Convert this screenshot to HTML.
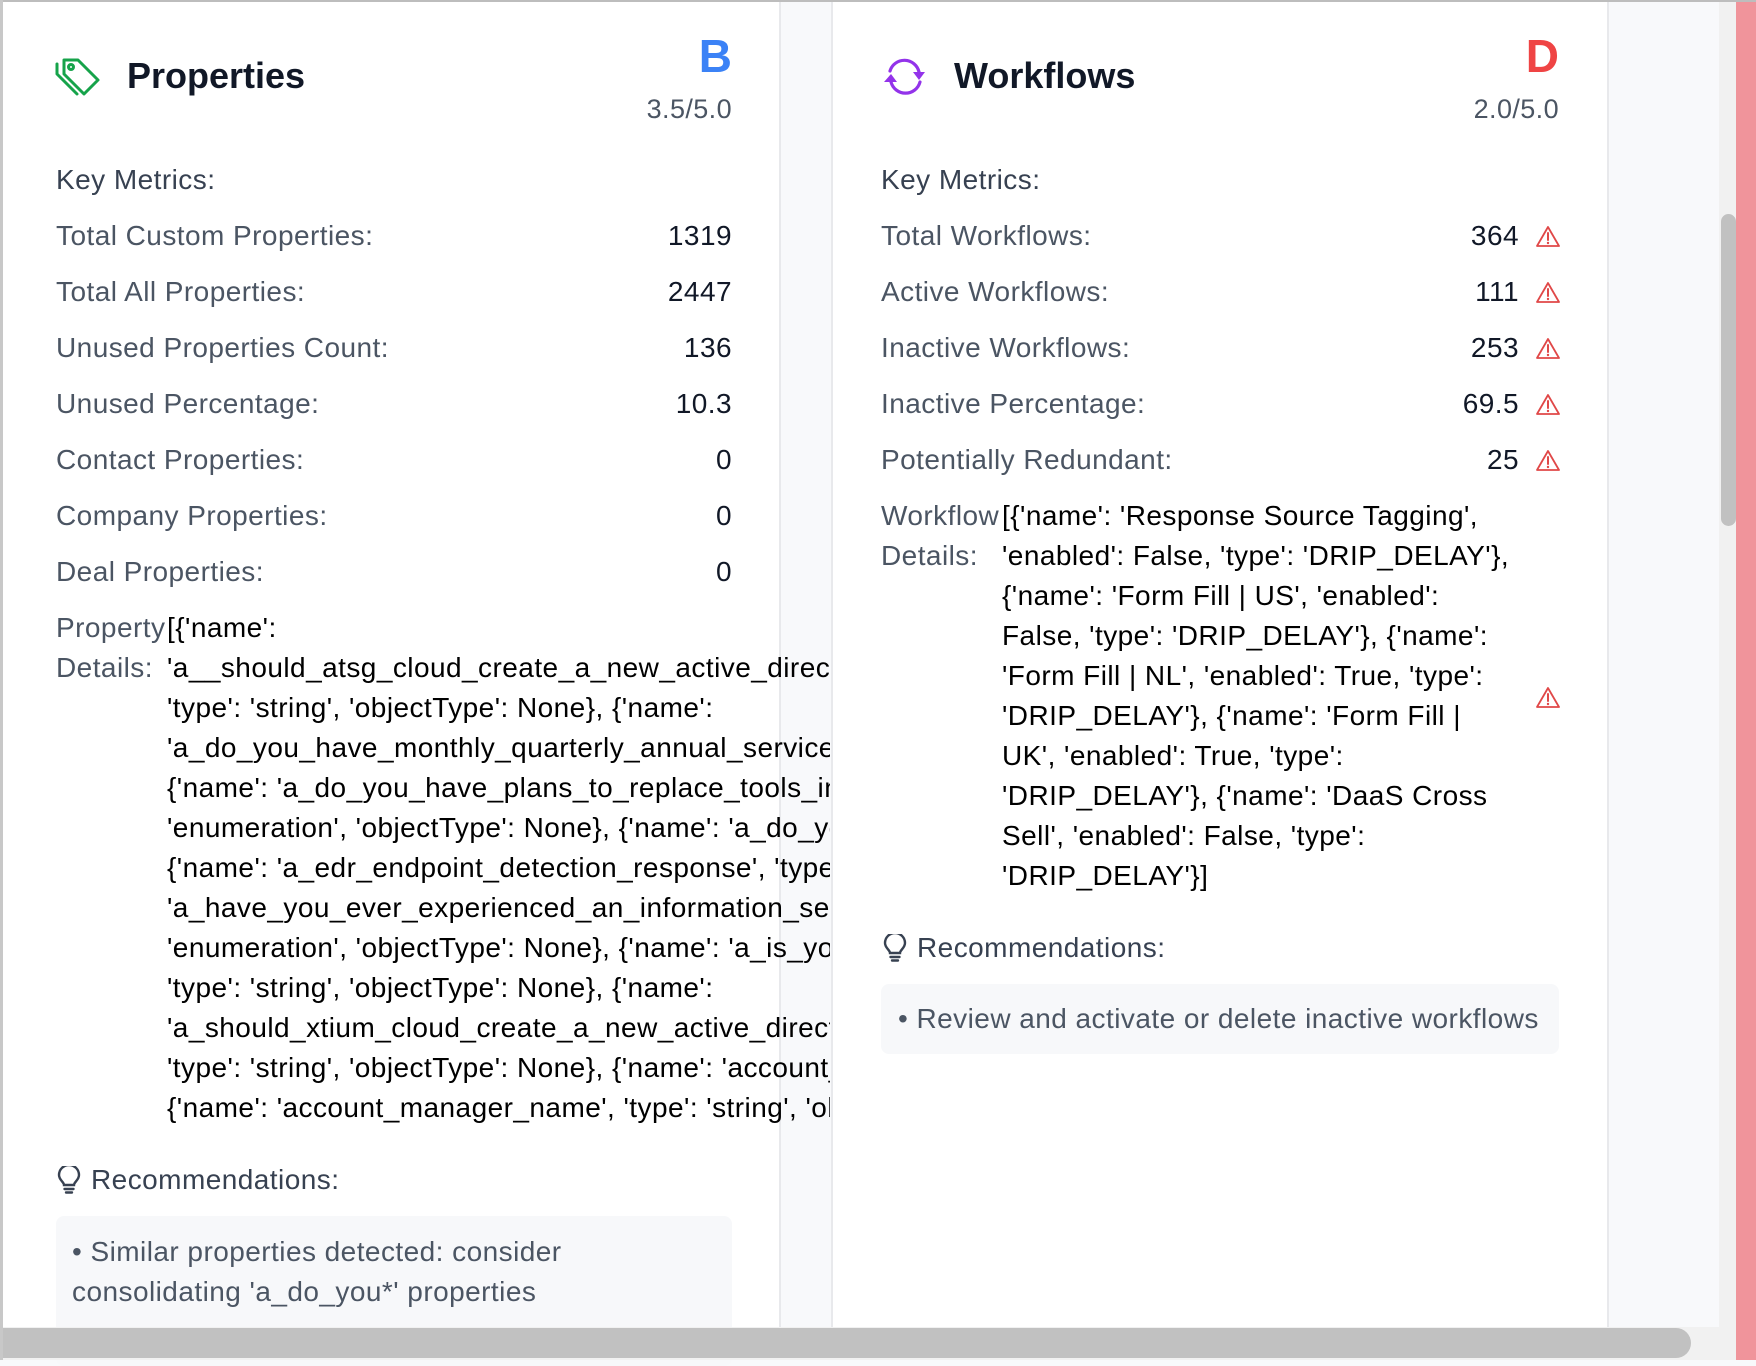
<!DOCTYPE html>
<html><head><meta charset="utf-8"><style>
*{margin:0;padding:0;box-sizing:border-box}
html,body{width:1756px;height:1360px;overflow:hidden;background:#f8f9fb;font-family:"Liberation Sans",Arial,sans-serif}
.a{position:absolute;white-space:nowrap}
.card{position:absolute;background:#fff;top:0;height:1360px}
.lbl{color:#4b5563;font-size:28px;line-height:40px;letter-spacing:0.45px}
.val{color:#111827;font-size:28px;line-height:40px;letter-spacing:0.45px}
.r{text-align:right}
</style></head><body>
<div class="a" style="left:0;top:0;width:1756px;height:2px;background:#bdbdbd;z-index:5"></div>
<div class="a" style="left:0;top:0;width:3px;height:1360px;background:#c8c8c8;z-index:5"></div>
<div class="card" style="left:3px;width:778px;border-right:2px solid #e8e9ec"></div>
<div class="card" style="left:831px;width:778px;border-left:2px solid #e8e9ec;border-right:2px solid #e8e9ec"></div>
<div class="a" style="left:1609px;top:0;width:111px;height:1360px;background:#f8f9fb"></div>
<div class="a" style="left:1719px;top:0;width:17px;height:1360px;background:#f1f1f1"></div>
<div class="a" style="left:1721px;top:214px;width:15px;height:312px;background:#c1c1c1;border-radius:8px"></div>
<div class="a" style="left:1736px;top:0;width:20px;height:1360px;background:#f0949b"></div>

<!-- LEFT CARD -->
<svg class="a" style="left:52px;top:54px" width="50" height="48" viewBox="0 0 50 48" fill="none" stroke="#16a34a" stroke-width="3" stroke-linejoin="round" stroke-linecap="round">
<path d="M12 6h14l20 20-14 14L12 20z"/><circle cx="19" cy="13" r="2.5"/><path d="M5 10v10l20 20"/>
</svg>
<div class="a" style="left:127px;top:52px;font-size:36px;line-height:48px;font-weight:bold;color:#111827">Properties</div>
<div class="a r" style="left:632px;width:100px;top:31px;font-size:46px;line-height:50px;font-weight:bold;color:#3b82f6">B</div>
<div class="a r" style="left:532px;width:200px;top:91px;font-size:27px;line-height:36px;color:#4b5563;letter-spacing:0.4px">3.5/5.0</div>

<div class="a lbl" style="left:56px;top:160px;color:#374151">Key Metrics:</div>
<div class="a lbl" style="left:56px;top:216px">Total Custom Properties:</div><div class="a val r" style="left:532px;width:200px;top:216px">1319</div>
<div class="a lbl" style="left:56px;top:272px">Total All Properties:</div><div class="a val r" style="left:532px;width:200px;top:272px">2447</div>
<div class="a lbl" style="left:56px;top:328px">Unused Properties Count:</div><div class="a val r" style="left:532px;width:200px;top:328px">136</div>
<div class="a lbl" style="left:56px;top:384px">Unused Percentage:</div><div class="a val r" style="left:532px;width:200px;top:384px">10.3</div>
<div class="a lbl" style="left:56px;top:440px">Contact Properties:</div><div class="a val r" style="left:532px;width:200px;top:440px">0</div>
<div class="a lbl" style="left:56px;top:496px">Company Properties:</div><div class="a val r" style="left:532px;width:200px;top:496px">0</div>
<div class="a lbl" style="left:56px;top:552px">Deal Properties:</div><div class="a val r" style="left:532px;width:200px;top:552px">0</div>

<div class="a lbl" style="left:56px;top:608px">Property</div>
<div class="a lbl" style="left:56px;top:648px">Details:</div>
<div class="a val" style="left:167px;top:608px;width:663px;overflow:hidden;color:#000">
<div>[{'name':</div>
<div>'a__should_atsg_cloud_create_a_new_active_directory_domain',</div>
<div>'type': 'string', 'objectType': None}, {'name':</div>
<div>'a_do_you_have_monthly_quarterly_annual_service_contracts',</div>
<div>{'name': 'a_do_you_have_plans_to_replace_tools_in_the_next',</div>
<div>'enumeration', 'objectType': None}, {'name': 'a_do_you_use',</div>
<div>{'name': 'a_edr_endpoint_detection_response', 'type': 'string',</div>
<div>'a_have_you_ever_experienced_an_information_security_incident',</div>
<div>'enumeration', 'objectType': None}, {'name': 'a_is_your_org',</div>
<div>'type': 'string', 'objectType': None}, {'name':</div>
<div>'a_should_xtium_cloud_create_a_new_active_directory_domain',</div>
<div>'type': 'string', 'objectType': None}, {'name': 'account_id',</div>
<div>{'name': 'account_manager_name', 'type': 'string', 'objectType'</div>
</div>

<svg class="a" style="left:56px;top:1166px" width="26" height="28" viewBox="0 0 26 28" fill="none" stroke="#374151" stroke-width="2.4" stroke-linecap="round">
<path d="M8 19c0-3-5-5-5-10a10 10 0 0 1 20 0c0 5-5 7-5 10z"/><path d="M8.5 23h9M10 26.5h6"/>
</svg>
<div class="a lbl" style="left:91px;top:1160px;color:#374151">Recommendations:</div>
<div class="a" style="left:56px;top:1216px;width:676px;height:150px;background:#f7f8fa;border-radius:8px"></div>
<div class="a lbl" style="left:72px;top:1232px">• Similar properties detected: consider</div>
<div class="a lbl" style="left:72px;top:1272px">consolidating 'a_do_you*' properties</div>

<!-- RIGHT CARD -->
<svg class="a" style="left:880px;top:54px" width="50" height="46" viewBox="0 0 50 46" fill="none" stroke="#9333ea" stroke-width="3.2" stroke-linecap="round">
<path d="M10 17A15 15 0 0 1 39 18"/><path d="M40 28A15 15 0 0 1 11 28"/>
<path d="M33 18h12l-6 8z" fill="#9333ea" stroke="none"/><path d="M4 28h13l-6-8z" fill="#9333ea" stroke="none"/>
</svg>
<div class="a" style="left:954px;top:52px;font-size:36px;line-height:48px;font-weight:bold;color:#111827">Workflows</div>
<div class="a r" style="left:1459px;width:100px;top:31px;font-size:46px;line-height:50px;font-weight:bold;color:#ef4444">D</div>
<div class="a r" style="left:1359px;width:200px;top:91px;font-size:27px;line-height:36px;color:#4b5563;letter-spacing:0.4px">2.0/5.0</div>

<div class="a lbl" style="left:881px;top:160px;color:#374151">Key Metrics:</div>
<div class="a lbl" style="left:881px;top:216px">Total Workflows:</div><div class="a val r" style="left:1319px;width:200px;top:216px">364</div>
<div class="a lbl" style="left:881px;top:272px">Active Workflows:</div><div class="a val r" style="left:1319px;width:200px;top:272px">111</div>
<div class="a lbl" style="left:881px;top:328px">Inactive Workflows:</div><div class="a val r" style="left:1319px;width:200px;top:328px">253</div>
<div class="a lbl" style="left:881px;top:384px">Inactive Percentage:</div><div class="a val r" style="left:1319px;width:200px;top:384px">69.5</div>
<div class="a lbl" style="left:881px;top:440px">Potentially Redundant:</div><div class="a val r" style="left:1319px;width:200px;top:440px">25</div>

<svg width="0" height="0" style="position:absolute"><defs><g id="w"><path d="M12 2L23 21H1z" fill="none" stroke="#e04848" stroke-width="1.8" stroke-linejoin="round"/><path d="M12 8v7" stroke="#e04848" stroke-width="2" stroke-linecap="round"/><circle cx="12" cy="18" r="1.2" fill="#e04848"/></g></defs></svg>
<svg class="a" style="left:1536px;top:225px" width="24" height="23"><use href="#w"/></svg>
<svg class="a" style="left:1536px;top:281px" width="24" height="23"><use href="#w"/></svg>
<svg class="a" style="left:1536px;top:337px" width="24" height="23"><use href="#w"/></svg>
<svg class="a" style="left:1536px;top:393px" width="24" height="23"><use href="#w"/></svg>
<svg class="a" style="left:1536px;top:449px" width="24" height="23"><use href="#w"/></svg>
<svg class="a" style="left:1536px;top:686px" width="24" height="23"><use href="#w"/></svg>

<div class="a lbl" style="left:881px;top:496px">Workflow</div>
<div class="a lbl" style="left:881px;top:536px">Details:</div>
<div class="a val" style="left:1002px;top:496px;color:#000">
<div>[{'name': 'Response Source Tagging',</div>
<div>'enabled': False, 'type': 'DRIP_DELAY'},</div>
<div>{'name': 'Form Fill | US', 'enabled':</div>
<div>False, 'type': 'DRIP_DELAY'}, {'name':</div>
<div>'Form Fill | NL', 'enabled': True, 'type':</div>
<div>'DRIP_DELAY'}, {'name': 'Form Fill |</div>
<div>UK', 'enabled': True, 'type':</div>
<div>'DRIP_DELAY'}, {'name': 'DaaS Cross</div>
<div>Sell', 'enabled': False, 'type':</div>
<div>'DRIP_DELAY'}]</div>
</div>

<svg class="a" style="left:882px;top:934px" width="26" height="28" viewBox="0 0 26 28" fill="none" stroke="#374151" stroke-width="2.4" stroke-linecap="round">
<path d="M8 19c0-3-5-5-5-10a10 10 0 0 1 20 0c0 5-5 7-5 10z"/><path d="M8.5 23h9M10 26.5h6"/>
</svg>
<div class="a lbl" style="left:917px;top:928px;color:#374151">Recommendations:</div>
<div class="a" style="left:881px;top:984px;width:678px;height:70px;background:#f7f8fa;border-radius:8px"></div>
<div class="a lbl" style="left:898px;top:999px">• Review and activate or delete inactive workflows</div>

<!-- horizontal scrollbar -->
<div class="a" style="left:0;top:1327px;width:1736px;height:33px;background:#f1f1f1;z-index:4"></div>
<div class="a" style="left:0;top:1328px;width:1691px;height:30px;background:#c1c1c1;border-radius:0 15px 15px 0;z-index:4"></div>
</body></html>
